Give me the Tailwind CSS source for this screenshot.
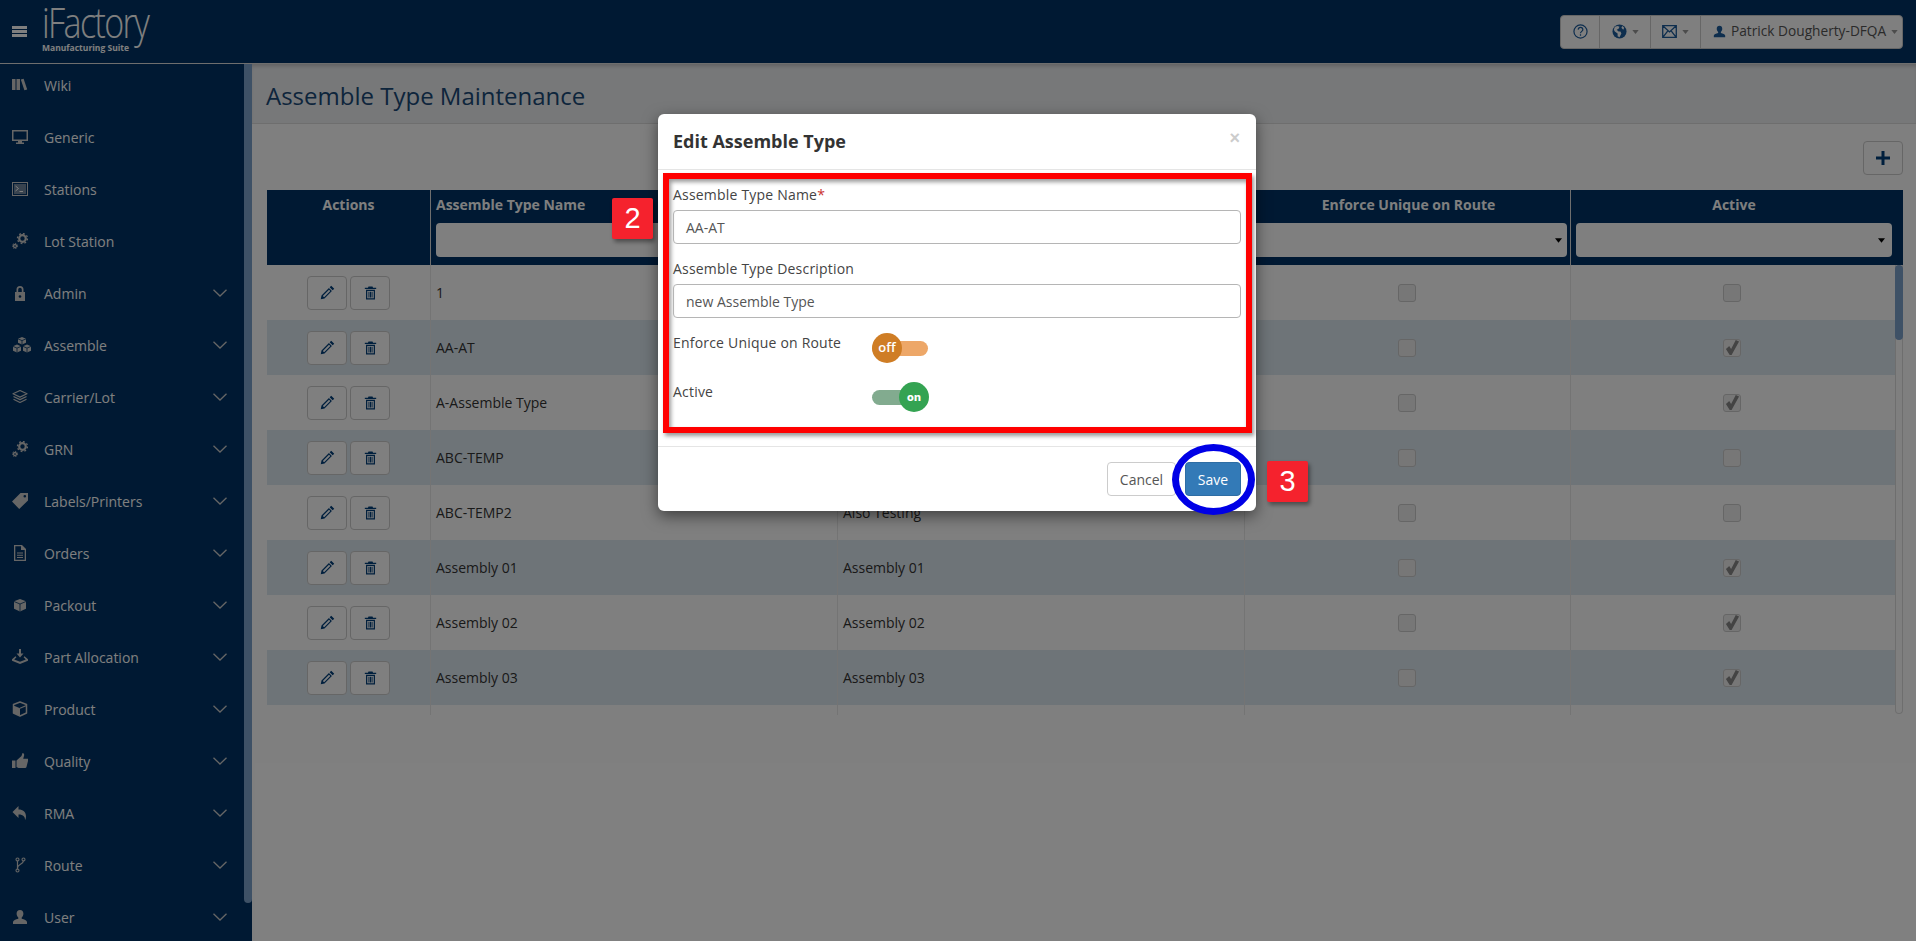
<!DOCTYPE html>
<html lang="en">
<head>
    <meta charset="UTF-8">
    <meta name="viewport" content="width=device-width, initial-scale=1.0">
    <title>Assemble Type Maintenance - iFactory</title>
    <script src="https://cdn.jsdelivr.net/npm/@tailwindcss/browser@4"></script>
</head>
<body class="relative h-screen overflow-hidden bg-white font-['Open_Sans',sans-serif] text-[14px] text-[#333]">
    <!-- Icon set -->
    <svg class="hidden">
        <symbol id="i-books" viewBox="0 0 16 16"><path fill="currentColor" d="M0 2h3.500v11H0zM4.500 2H8v11H4.500zM8.800 2.600l2.800-.8 3.600 10.600-2.800.9z"/></symbol>
        <symbol id="i-monitor" viewBox="0 0 16 16"><path fill="currentColor" d="M0 1h16v11H10v1.500h2V15H4v-1.500h2V12H0zm1.500 1.500v8h13v-8z"/></symbol>
        <symbol id="i-terminal" viewBox="0 0 16 16"><path fill="currentColor" d="M0 1h16v14H0zm1 1v12h14V2z"/><path fill="currentColor" opacity=".55" d="M2 3h12v10H2z"/><path fill="none" stroke="#fff" stroke-width="1" d="M3.500 5l3 2.500-3 2.500M7.500 10.500H11"/></symbol>
        <symbol id="i-cogs" viewBox="0 0 16 16"><circle cx="10.500" cy="5.500" r="3.300" fill="none" stroke="currentColor" stroke-width="2.200"/><circle cx="10.500" cy="5.500" r="5" fill="none" stroke="currentColor" stroke-width="1.400" stroke-dasharray="1.800 2.100"/><circle cx="3" cy="13" r="1.500" fill="none" stroke="currentColor" stroke-width="1.300"/><circle cx="3" cy="13" r="2.600" fill="none" stroke="currentColor" stroke-width="1" stroke-dasharray="1.200 1.200"/></symbol>
        <symbol id="i-lock" viewBox="0 0 16 16"><path fill="currentColor" d="M4.500 7V4.500a3.500 3.500 0 0 1 7 0V7H13v9H3V7zM6.200 7h3.600V4.500a1.800 1.800 0 0 0-3.600 0z"/><circle cx="8" cy="11.500" r="1.300" fill="#003366"/></symbol>
        <symbol id="i-cubes" viewBox="0 0 20 16"><path fill="currentColor" d="M10 0l4 1.700v4.100L10 7.500 6 5.800V1.700zM5 7.500l4 1.700v4.600L5 15.500 1 13.800V9.200zM15 7.500l4 1.700v4.600l-4 1.700-4-1.700V9.200z"/><path fill="none" stroke="#003366" stroke-width=".8" d="M6 1.900l4 1.700 4-1.700M1 9.400l4 1.700 4-1.700M11 9.400l4 1.700 4-1.700M10 3.600v3.900M5 11.100v4.400M15 11.100v4.400"/></symbol>
        <symbol id="i-layers" viewBox="0 0 16 16"><path fill="none" stroke="currentColor" stroke-width="1.200" stroke-linejoin="round" d="M8 1.500l7 3.300-7 3.300-7-3.300zM1.500 7.500L8 10.600l6.500-3.100M1.500 10.300L8 13.500l6.500-3.200"/></symbol>
        <symbol id="i-tag" viewBox="0 0 16 16"><path fill="currentColor" d="M8.500 0H16v7.500L7.200 16 0 8.500zM12.800 2a1.300 1.300 0 1 0 0 2.600 1.300 1.300 0 0 0 0-2.600z" fill-rule="evenodd"/></symbol>
        <symbol id="i-file" viewBox="0 0 16 16"><path fill="currentColor" fill-rule="evenodd" d="M2 0h8l4 4v12H2zm1.300 1.300v13.400h9.400V5H9V1.300zM5 7.500h6v1H5zM5 9.800h6v1H5zM5 12h6v1H5z"/></symbol>
        <symbol id="i-box" viewBox="0 0 16 16"><path fill="currentColor" d="M8 2l6 2.300v7.400L8 14.500l-6-2.800V4.300z"/><path fill="none" stroke="#003366" stroke-width=".8" d="M2 4.500l6 2.500 6-2.500M8 7v7.500"/></symbol>
        <symbol id="i-tray" viewBox="0 0 16 16"><path fill="currentColor" d="M7 0h2v4.500h2.500L8 8.500l-3.500-4H7z"/><path fill="currentColor" d="M3.500 7.300L0 10.300v1.500L8 15l8-3.200v-1.500l-3.500-3-.9 1 2.200 2.100L8 12.700 2.200 10.400l2.200-2.100z"/></symbol>
        <symbol id="i-cube" viewBox="0 0 16 16"><path fill="none" stroke="currentColor" stroke-width="1.500" stroke-linejoin="round" d="M8 1l6.500 2.500v8.500L8 15l-6.500-3V3.500z"/><path fill="currentColor" d="M1.500 4.500L8 7.200V15l-6.500-3z"/><path fill="none" stroke="currentColor" stroke-width="1.200" d="M8 7.200l6.500-2.700"/></symbol>
        <symbol id="i-thumb" viewBox="0 0 16 16"><path fill="currentColor" d="M0 7.500h3.500V15H0zM4.500 7.500L9.500 3l1-3c1.300 0 2 1.200 1.500 3l-.8 2.800H16V8l-1.600 6.300c-.2.500-.6.700-1.100.7H6.500l-2-1z"/></symbol>
        <symbol id="i-reply" viewBox="0 0 16 16"><path fill="currentColor" d="M6.500 1v3.500C11 4.500 14 7 14 11.500c0 1.500-.5 3-1 3.500.3-3-1.500-5.500-6.500-5.500V13L.5 7z"/></symbol>
        <symbol id="i-branch" viewBox="0 0 16 16"><path fill="none" stroke="currentColor" stroke-width="1.200" d="M5.500 3.500v9M11.500 3.500c0 4-6 3.500-6 7.500"/><circle cx="5.500" cy="2.500" r="1.500" fill="none" stroke="currentColor" stroke-width="1.100"/><circle cx="11.500" cy="2.500" r="1.500" fill="none" stroke="currentColor" stroke-width="1.100"/><circle cx="5.500" cy="13.500" r="1.500" fill="none" stroke="currentColor" stroke-width="1.100"/></symbol>
        <symbol id="i-user" viewBox="0 0 16 16"><path fill="currentColor" d="M8 1c2.200 0 3.400 1.500 3.400 3.600 0 1.600-.7 3.100-1.700 3.900v1.300c2.500.6 5.300 1.700 5.300 3.200V15H1v-2c0-1.500 2.800-2.600 5.300-3.200V8.500C5.300 7.700 4.600 6.200 4.600 4.600 4.600 2.500 5.800 1 8 1z"/></symbol>
        <symbol id="i-chevron" viewBox="0 0 14 8"><path fill="none" stroke="currentColor" stroke-width="1.300" d="M.5.700L7 7 13.500.7"/></symbol>
        <symbol id="i-pencil" viewBox="0 0 16 16"><path fill="currentColor" fill-rule="evenodd" d="M12 .8l3.200 3.200-1.700 1.700-3.200-3.200zM9.500 3.300l3.200 3.200-7.900 7.900L.8 15.200l.8-4zM9.600 5L3 11.600l1.400 1.400L11 6.400z"/></symbol>
        <symbol id="i-trash" viewBox="0 0 16 16"><path fill="currentColor" fill-rule="evenodd" d="M5.500 0h5l.6 1.500H15V3H1V1.500h3.900zM2.500 4h11v12h-11zM4 5.500v9h8v-9zM5.500 6.500h1.200v7H5.500zM7.400 6.500h1.200v7H7.400zM9.300 6.500h1.200v7H9.300z"/></symbol>
        <symbol id="i-check" viewBox="0 0 16 16"><path fill="currentColor" d="M1 9.500l3.500-3 2 3L11.500 0 15 1.500 7 16H5z"/></symbol>
        <symbol id="i-caret" viewBox="0 0 8 5"><path fill="currentColor" d="M0 0h8L4 5z"/></symbol>
    </svg>

    <!-- Header -->
    <header class="flex h-16 items-center justify-between border-b border-[#ddd] bg-[#003366] pl-3 pr-[13px]">
        <div class="flex items-center">
            <div class="flex w-[15px] flex-col gap-px">
                <span class="h-[3px] bg-white"></span>
                <span class="h-[3px] bg-white"></span>
                <span class="h-[3px] bg-white"></span>
            </div>
            <div class="mb-[9px] ml-[15px] flex w-[110px] flex-col text-white">
                <span class="origin-left scale-x-[0.81] whitespace-nowrap text-[42px] font-light leading-[42px] tracking-[-2px]">iFactory</span>
                <span class="whitespace-nowrap text-[8.500px] font-bold leading-[10px]">Manufacturing Suite</span>
            </div>
        </div>
        <div class="flex h-[34px] w-[343px] items-stretch rounded-[4px] border border-[#ccc] bg-white text-[#555]">
            <div class="flex w-[39px] shrink-0 items-center justify-center border-r border-[#ccc] text-[#1d5c9c]">
                <svg class="h-[15px] w-[15px]" viewBox="0 0 16 16"><circle cx="8" cy="8" r="7" fill="none" stroke="currentColor" stroke-width="1.300"/><path fill="none" stroke="currentColor" stroke-width="1.300" d="M5.500 6c.2-3.300 5-3.300 5 0 0 1.700-2.500 2-2.500 3.800M8 11v1.500"/></svg>
            </div>
            <div class="flex w-[51px] shrink-0 items-center justify-center gap-[5px] border-r border-[#ccc]">
                <svg class="h-[15px] w-[15px] text-[#1d5c9c]" viewBox="0 0 16 16"><circle cx="8" cy="8" r="7.500" fill="currentColor"/><path fill="#fff" d="M3 3l3-1 2 1-1 2-2 1 2 2 2 0 1 2-2 4-2-1 0-3-3-2-1-2zM11 2l2 2-1 2-2-2z"/></svg>
                <svg class="h-[4px] w-[7px] text-[#999]"><use href="#i-caret"/></svg>
            </div>
            <div class="flex w-[50px] shrink-0 items-center justify-center gap-[5px] border-r border-[#ccc]">
                <svg class="h-[13px] w-[15px] text-[#1d5c9c]" viewBox="0 0 16 14"><path fill="none" stroke="currentColor" stroke-width="1.400" d="M.7.700h14.600v12.600H.7zM1 1l7 6.500L15 1M1 13l5-6.500M15 13l-5-6.500"/></svg>
                <svg class="h-[4px] w-[7px] text-[#999]"><use href="#i-caret"/></svg>
            </div>
            <div class="flex flex-1 items-center gap-[5px] pl-[12px] pr-[4px] text-[13.700px]">
                <svg class="h-[13px] w-[13px] shrink-0 text-[#1d5c9c]"><use href="#i-user"/></svg>
                <span class="whitespace-nowrap">Patrick Dougherty-DFQA</span>
                <svg class="h-[4px] w-[7px] shrink-0 text-[#999]"><use href="#i-caret"/></svg>
            </div>
        </div>
    </header>

    <div class="flex h-[877px]">
        <!-- Sidebar -->
        <aside class="flex w-[252px] shrink-0 overflow-hidden bg-[#003366]">
            <nav class="-mt-[5px] w-[244px] shrink-0 text-white">
                <a class="flex h-[52px] items-center pl-3"><svg class="h-4 w-4 text-[#ccc]"><use href="#i-books"/></svg><span class="ml-4">Wiki</span></a>
                <a class="flex h-[52px] items-center pl-3"><svg class="h-4 w-4 text-[#ccc]"><use href="#i-monitor"/></svg><span class="ml-4">Generic</span></a>
                <a class="flex h-[52px] items-center pl-3"><svg class="h-4 w-4 text-[#ccc]"><use href="#i-terminal"/></svg><span class="ml-4">Stations</span></a>
                <a class="flex h-[52px] items-center pl-3"><svg class="h-4 w-4 text-[#ccc]"><use href="#i-cogs"/></svg><span class="ml-4">Lot Station</span></a>
                <a class="flex h-[52px] items-center pl-3"><svg class="h-4 w-4 text-[#ccc]"><use href="#i-lock"/></svg><span class="ml-4 flex-1">Admin</span><svg class="mr-[17px] h-2 w-[14px] text-[#ccc]"><use href="#i-chevron"/></svg></a>
                <a class="flex h-[52px] items-center pl-3"><svg class="h-4 w-5 text-[#ccc]"><use href="#i-cubes"/></svg><span class="ml-3 flex-1">Assemble</span><svg class="mr-[17px] h-2 w-[14px] text-[#ccc]"><use href="#i-chevron"/></svg></a>
                <a class="flex h-[52px] items-center pl-3"><svg class="h-4 w-4 text-[#ccc]"><use href="#i-layers"/></svg><span class="ml-4 flex-1">Carrier/Lot</span><svg class="mr-[17px] h-2 w-[14px] text-[#ccc]"><use href="#i-chevron"/></svg></a>
                <a class="flex h-[52px] items-center pl-3"><svg class="h-4 w-4 text-[#ccc]"><use href="#i-cogs"/></svg><span class="ml-4 flex-1">GRN</span><svg class="mr-[17px] h-2 w-[14px] text-[#ccc]"><use href="#i-chevron"/></svg></a>
                <a class="flex h-[52px] items-center pl-3"><svg class="h-4 w-4 text-[#ccc]"><use href="#i-tag"/></svg><span class="ml-4 flex-1">Labels/Printers</span><svg class="mr-[17px] h-2 w-[14px] text-[#ccc]"><use href="#i-chevron"/></svg></a>
                <a class="flex h-[52px] items-center pl-3"><svg class="h-4 w-4 text-[#ccc]"><use href="#i-file"/></svg><span class="ml-4 flex-1">Orders</span><svg class="mr-[17px] h-2 w-[14px] text-[#ccc]"><use href="#i-chevron"/></svg></a>
                <a class="flex h-[52px] items-center pl-3"><svg class="h-4 w-4 text-[#ccc]"><use href="#i-box"/></svg><span class="ml-4 flex-1">Packout</span><svg class="mr-[17px] h-2 w-[14px] text-[#ccc]"><use href="#i-chevron"/></svg></a>
                <a class="flex h-[52px] items-center pl-3"><svg class="h-4 w-4 text-[#ccc]"><use href="#i-tray"/></svg><span class="ml-4 flex-1">Part Allocation</span><svg class="mr-[17px] h-2 w-[14px] text-[#ccc]"><use href="#i-chevron"/></svg></a>
                <a class="flex h-[52px] items-center pl-3"><svg class="h-4 w-4 text-[#ccc]"><use href="#i-cube"/></svg><span class="ml-4 flex-1">Product</span><svg class="mr-[17px] h-2 w-[14px] text-[#ccc]"><use href="#i-chevron"/></svg></a>
                <a class="flex h-[52px] items-center pl-3"><svg class="h-4 w-4 text-[#ccc]"><use href="#i-thumb"/></svg><span class="ml-4 flex-1">Quality</span><svg class="mr-[17px] h-2 w-[14px] text-[#ccc]"><use href="#i-chevron"/></svg></a>
                <a class="flex h-[52px] items-center pl-3"><svg class="h-4 w-4 text-[#ccc]"><use href="#i-reply"/></svg><span class="ml-4 flex-1">RMA</span><svg class="mr-[17px] h-2 w-[14px] text-[#ccc]"><use href="#i-chevron"/></svg></a>
                <a class="flex h-[52px] items-center pl-3"><svg class="h-4 w-4 text-[#ccc]"><use href="#i-branch"/></svg><span class="ml-4 flex-1">Route</span><svg class="mr-[17px] h-2 w-[14px] text-[#ccc]"><use href="#i-chevron"/></svg></a>
                <a class="flex h-[52px] items-center pl-3"><svg class="h-4 w-4 text-[#ccc]"><use href="#i-user"/></svg><span class="ml-4 flex-1">User</span><svg class="mr-[17px] h-2 w-[14px] text-[#ccc]"><use href="#i-chevron"/></svg></a>
            </nav>
            <div class="h-[839px] w-2 rounded-b-[4px] bg-[#7da2cc]"></div>
        </aside>

        <!-- Main Content -->
        <main class="min-w-0 flex-1">
            <div class="flex h-[60px] items-center border-b border-[#ddd] bg-[#eef0f3] pl-[14px] pt-[4px] shadow-[inset_0_4px_4px_-2px_rgba(0,0,0,0.2)]">
                <h1 class="text-[24px] leading-[34px] text-[#1b4a78]">Assemble Type Maintenance</h1>
            </div>
            <div class="pl-[15px] pr-[13px]">
                <div class="flex h-[66px] items-start justify-end pt-[17px]">
                    <button class="flex h-[34px] w-10 items-center justify-center rounded-[4px] border border-[#ccc] bg-white text-[#003e7a]">
                        <svg class="h-[14px] w-[14px]" viewBox="0 0 14 14"><path fill="currentColor" d="M5.500 0h3v5.500H14v3H8.500V14h-3V8.500H0v-3h5.500z"/></svg>
                    </button>
                </div>

                <!-- Table header -->
                <div class="grid h-[75px] grid-cols-[164px_407px_407px_326px_332px] bg-[#003366] text-center font-bold text-white">
                    <div class="border-r border-[#ddd] pt-[4px]">Actions</div>
                    <div class="border-r border-[#ddd] px-[5px] pt-[4px] text-left">
                        Assemble Type Name
                        <div class="mt-[8px] h-[34px] rounded-[4px] bg-white"></div>
                    </div>
                    <div class="border-r border-[#ddd] px-[5px] pt-[4px] text-left">
                        Assemble Type Description
                        <div class="mt-[8px] h-[34px] rounded-[4px] bg-white"></div>
                    </div>
                    <div class="border-r border-[#ddd] pl-[5px] pr-[3px] pt-[4px]">
                        Enforce Unique on Route
                        <div class="mt-[8px] flex h-[34px] items-center justify-end rounded-[4px] bg-white pr-[5px] text-black"><svg class="h-[5px] w-[7px]"><use href="#i-caret"/></svg></div>
                    </div>
                    <div class="pl-[5px] pr-[11px] pt-[4px]">
                        Active
                        <div class="mt-[8px] flex h-[34px] items-center justify-end rounded-[4px] bg-white pr-[7px] text-black"><svg class="h-[5px] w-[7px]"><use href="#i-caret"/></svg></div>
                    </div>
                </div>

                <!-- Table body -->
                <div class="flex h-[450px]">
                    <div class="w-[1628px] overflow-hidden">
                        <div class="grid h-[55px] grid-cols-[164px_407px_407px_326px_324px] items-stretch">
                            <div class="flex items-center justify-center gap-[3px] border-r border-[#e8e8e8]"><button class="flex h-[34px] w-10 items-center justify-center rounded-[4px] border border-[#ccc] bg-white text-[#003e7a]"><svg class="h-[15px] w-[15px]"><use href="#i-pencil"/></svg></button><button class="flex h-[34px] w-10 items-center justify-center rounded-[4px] border border-[#ccc] bg-white text-[#003e7a]"><svg class="h-[14px] w-[13px]"><use href="#i-trash"/></svg></button></div>
                            <div class="flex items-center border-r border-[#e8e8e8] pl-[5px]">1</div>
                            <div class="flex items-center border-r border-[#e8e8e8] pl-[5px]"></div>
                            <div class="flex items-center justify-center border-r border-[#e8e8e8] pr-[2px]"><span class="h-[18px] w-[18px] rounded-[3px] border border-[#ccc] bg-[#eee]"></span></div>
                            <div class="flex items-center justify-center pr-[2px]"><span class="h-[18px] w-[18px] rounded-[3px] border border-[#ccc] bg-[#eee]"></span></div>
                        </div>
                        <div class="grid h-[55px] grid-cols-[164px_407px_407px_326px_324px] items-stretch bg-[#dde8f0]">
                            <div class="flex items-center justify-center gap-[3px] border-r border-[#e8e8e8]"><button class="flex h-[34px] w-10 items-center justify-center rounded-[4px] border border-[#ccc] bg-white text-[#003e7a]"><svg class="h-[15px] w-[15px]"><use href="#i-pencil"/></svg></button><button class="flex h-[34px] w-10 items-center justify-center rounded-[4px] border border-[#ccc] bg-white text-[#003e7a]"><svg class="h-[14px] w-[13px]"><use href="#i-trash"/></svg></button></div>
                            <div class="flex items-center border-r border-[#e8e8e8] pl-[5px]">AA-AT</div>
                            <div class="flex items-center border-r border-[#e8e8e8] pl-[5px]"></div>
                            <div class="flex items-center justify-center border-r border-[#e8e8e8] pr-[2px]"><span class="h-[18px] w-[18px] rounded-[3px] border border-[#ccc] bg-[#eee]"></span></div>
                            <div class="flex items-center justify-center pr-[2px]"><span class="flex h-[18px] w-[18px] items-center justify-center rounded-[3px] border border-[#ccc] bg-[#eee] text-[#888]"><svg class="h-[15px] w-[15px]"><use href="#i-check"/></svg></span></div>
                        </div>
                        <div class="grid h-[55px] grid-cols-[164px_407px_407px_326px_324px] items-stretch">
                            <div class="flex items-center justify-center gap-[3px] border-r border-[#e8e8e8]"><button class="flex h-[34px] w-10 items-center justify-center rounded-[4px] border border-[#ccc] bg-white text-[#003e7a]"><svg class="h-[15px] w-[15px]"><use href="#i-pencil"/></svg></button><button class="flex h-[34px] w-10 items-center justify-center rounded-[4px] border border-[#ccc] bg-white text-[#003e7a]"><svg class="h-[14px] w-[13px]"><use href="#i-trash"/></svg></button></div>
                            <div class="flex items-center border-r border-[#e8e8e8] pl-[5px]">A-Assemble Type</div>
                            <div class="flex items-center border-r border-[#e8e8e8] pl-[5px]"></div>
                            <div class="flex items-center justify-center border-r border-[#e8e8e8] pr-[2px]"><span class="h-[18px] w-[18px] rounded-[3px] border border-[#ccc] bg-[#eee]"></span></div>
                            <div class="flex items-center justify-center pr-[2px]"><span class="flex h-[18px] w-[18px] items-center justify-center rounded-[3px] border border-[#ccc] bg-[#eee] text-[#888]"><svg class="h-[15px] w-[15px]"><use href="#i-check"/></svg></span></div>
                        </div>
                        <div class="grid h-[55px] grid-cols-[164px_407px_407px_326px_324px] items-stretch bg-[#dde8f0]">
                            <div class="flex items-center justify-center gap-[3px] border-r border-[#e8e8e8]"><button class="flex h-[34px] w-10 items-center justify-center rounded-[4px] border border-[#ccc] bg-white text-[#003e7a]"><svg class="h-[15px] w-[15px]"><use href="#i-pencil"/></svg></button><button class="flex h-[34px] w-10 items-center justify-center rounded-[4px] border border-[#ccc] bg-white text-[#003e7a]"><svg class="h-[14px] w-[13px]"><use href="#i-trash"/></svg></button></div>
                            <div class="flex items-center border-r border-[#e8e8e8] pl-[5px]">ABC-TEMP</div>
                            <div class="flex items-center border-r border-[#e8e8e8] pl-[5px]"></div>
                            <div class="flex items-center justify-center border-r border-[#e8e8e8] pr-[2px]"><span class="h-[18px] w-[18px] rounded-[3px] border border-[#ccc] bg-[#eee]"></span></div>
                            <div class="flex items-center justify-center pr-[2px]"><span class="h-[18px] w-[18px] rounded-[3px] border border-[#ccc] bg-[#eee]"></span></div>
                        </div>
                        <div class="grid h-[55px] grid-cols-[164px_407px_407px_326px_324px] items-stretch">
                            <div class="flex items-center justify-center gap-[3px] border-r border-[#e8e8e8]"><button class="flex h-[34px] w-10 items-center justify-center rounded-[4px] border border-[#ccc] bg-white text-[#003e7a]"><svg class="h-[15px] w-[15px]"><use href="#i-pencil"/></svg></button><button class="flex h-[34px] w-10 items-center justify-center rounded-[4px] border border-[#ccc] bg-white text-[#003e7a]"><svg class="h-[14px] w-[13px]"><use href="#i-trash"/></svg></button></div>
                            <div class="flex items-center border-r border-[#e8e8e8] pl-[5px]">ABC-TEMP2</div>
                            <div class="flex items-center border-r border-[#e8e8e8] pl-[5px]">Also Testing</div>
                            <div class="flex items-center justify-center border-r border-[#e8e8e8] pr-[2px]"><span class="h-[18px] w-[18px] rounded-[3px] border border-[#ccc] bg-[#eee]"></span></div>
                            <div class="flex items-center justify-center pr-[2px]"><span class="h-[18px] w-[18px] rounded-[3px] border border-[#ccc] bg-[#eee]"></span></div>
                        </div>
                        <div class="grid h-[55px] grid-cols-[164px_407px_407px_326px_324px] items-stretch bg-[#dde8f0]">
                            <div class="flex items-center justify-center gap-[3px] border-r border-[#e8e8e8]"><button class="flex h-[34px] w-10 items-center justify-center rounded-[4px] border border-[#ccc] bg-white text-[#003e7a]"><svg class="h-[15px] w-[15px]"><use href="#i-pencil"/></svg></button><button class="flex h-[34px] w-10 items-center justify-center rounded-[4px] border border-[#ccc] bg-white text-[#003e7a]"><svg class="h-[14px] w-[13px]"><use href="#i-trash"/></svg></button></div>
                            <div class="flex items-center border-r border-[#e8e8e8] pl-[5px]">Assembly 01</div>
                            <div class="flex items-center border-r border-[#e8e8e8] pl-[5px]">Assembly 01</div>
                            <div class="flex items-center justify-center border-r border-[#e8e8e8] pr-[2px]"><span class="h-[18px] w-[18px] rounded-[3px] border border-[#ccc] bg-[#eee]"></span></div>
                            <div class="flex items-center justify-center pr-[2px]"><span class="flex h-[18px] w-[18px] items-center justify-center rounded-[3px] border border-[#ccc] bg-[#eee] text-[#888]"><svg class="h-[15px] w-[15px]"><use href="#i-check"/></svg></span></div>
                        </div>
                        <div class="grid h-[55px] grid-cols-[164px_407px_407px_326px_324px] items-stretch">
                            <div class="flex items-center justify-center gap-[3px] border-r border-[#e8e8e8]"><button class="flex h-[34px] w-10 items-center justify-center rounded-[4px] border border-[#ccc] bg-white text-[#003e7a]"><svg class="h-[15px] w-[15px]"><use href="#i-pencil"/></svg></button><button class="flex h-[34px] w-10 items-center justify-center rounded-[4px] border border-[#ccc] bg-white text-[#003e7a]"><svg class="h-[14px] w-[13px]"><use href="#i-trash"/></svg></button></div>
                            <div class="flex items-center border-r border-[#e8e8e8] pl-[5px]">Assembly 02</div>
                            <div class="flex items-center border-r border-[#e8e8e8] pl-[5px]">Assembly 02</div>
                            <div class="flex items-center justify-center border-r border-[#e8e8e8] pr-[2px]"><span class="h-[18px] w-[18px] rounded-[3px] border border-[#ccc] bg-[#eee]"></span></div>
                            <div class="flex items-center justify-center pr-[2px]"><span class="flex h-[18px] w-[18px] items-center justify-center rounded-[3px] border border-[#ccc] bg-[#eee] text-[#888]"><svg class="h-[15px] w-[15px]"><use href="#i-check"/></svg></span></div>
                        </div>
                        <div class="grid h-[55px] grid-cols-[164px_407px_407px_326px_324px] items-stretch bg-[#dde8f0]">
                            <div class="flex items-center justify-center gap-[3px] border-r border-[#e8e8e8]"><button class="flex h-[34px] w-10 items-center justify-center rounded-[4px] border border-[#ccc] bg-white text-[#003e7a]"><svg class="h-[15px] w-[15px]"><use href="#i-pencil"/></svg></button><button class="flex h-[34px] w-10 items-center justify-center rounded-[4px] border border-[#ccc] bg-white text-[#003e7a]"><svg class="h-[14px] w-[13px]"><use href="#i-trash"/></svg></button></div>
                            <div class="flex items-center border-r border-[#e8e8e8] pl-[5px]">Assembly 03</div>
                            <div class="flex items-center border-r border-[#e8e8e8] pl-[5px]">Assembly 03</div>
                            <div class="flex items-center justify-center border-r border-[#e8e8e8] pr-[2px]"><span class="h-[18px] w-[18px] rounded-[3px] border border-[#ccc] bg-[#eee]"></span></div>
                            <div class="flex items-center justify-center pr-[2px]"><span class="flex h-[18px] w-[18px] items-center justify-center rounded-[3px] border border-[#ccc] bg-[#eee] text-[#888]"><svg class="h-[15px] w-[15px]"><use href="#i-check"/></svg></span></div>
                        </div>
                        <div class="grid h-[10px] grid-cols-[164px_407px_407px_326px_324px]">
                            <div class="border-r border-[#e8e8e8]"></div>
                            <div class="border-r border-[#e8e8e8]"></div>
                            <div class="border-r border-[#e8e8e8]"></div>
                            <div class="border-r border-[#e8e8e8]"></div>
                        </div>
                    </div>
                    <!-- Table scrollbar -->
                    <div class="h-[449px] w-2 rounded-b-[4px] border border-t-0 border-[#ddd]">
                        <div class="-mx-px h-[75px] rounded-[4px] bg-[#7da2cc]"></div>
                    </div>
                </div>
            </div>
        </main>
    </div>

    <!-- Backdrop -->
    <div class="absolute inset-0 bg-black/50"></div>

    <!-- Modal -->
    <div class="absolute left-[658px] top-[114px] h-[397px] w-[598px] rounded-[6px] bg-white shadow-[0_5px_15px_rgba(0,0,0,0.5)]">
        <div class="flex h-[56px] items-center justify-between border-b border-[#e5e5e5] pb-[1px] pl-[15px] pr-[16px]">
            <h4 class="text-[18px] font-bold text-[#333]">Edit Assemble Type</h4>
            <span class="-mt-[6px] font-['Liberation_Sans',sans-serif] text-[18px] font-bold text-[#ccc]">&times;</span>
        </div>
        <div class="ml-[5px] mr-[4px] mt-[3px] h-[260px] border-[6px] border-[#ff0000] pl-1 pr-[5px] pt-[6px] text-[#444] shadow-[2px_3px_4px_rgba(0,0,0,0.4),inset_2px_3px_4px_rgba(0,0,0,0.4)]">
            <label class="block font-medium leading-5 tracking-[0.2px]">Assemble Type Name<span class="text-[#c9302c]">*</span></label>
            <div class="mt-[5px] flex h-[34px] items-center rounded-[4px] border border-[#b5b5b5] pl-3 text-[#555]">AA-AT</div>
            <label class="mt-[15px] block font-medium leading-5 tracking-[0.2px]">Assemble Type Description</label>
            <div class="mt-[5px] flex h-[34px] items-center rounded-[4px] border border-[#b5b5b5] pl-3 text-[#555]">new Assemble Type</div>
            <div class="mt-[15px] flex h-[30px] items-start">
                <label class="w-[199px] font-medium leading-5 tracking-[0.2px]">Enforce Unique on Route</label>
                <div class="relative h-[30px] w-[57px]">
                    <div class="absolute left-0 top-2 h-[15px] w-[56px] rounded-full bg-[#eda768]"></div>
                    <div class="absolute left-0 top-0 flex h-[30px] w-[30px] items-center justify-center rounded-full bg-[#cf7d25] text-[13px] font-semibold text-white">off</div>
                </div>
            </div>
            <div class="mt-[19px] flex h-[30px] items-start">
                <label class="w-[199px] font-medium leading-5 tracking-[0.2px]">Active</label>
                <div class="relative h-[30px] w-[57px]">
                    <div class="absolute left-0 top-2 h-[15px] w-[56px] rounded-full bg-[#82ab8f]"></div>
                    <div class="absolute left-[27px] top-0 flex h-[30px] w-[30px] items-center justify-center rounded-full bg-[#34a352] font-['Inter',sans-serif] text-[11px] font-extrabold text-white">on</div>
                </div>
            </div>
        </div>
        <div class="mt-[13px] flex h-[65px] items-start justify-end gap-[9px] border-t border-[#e5e5e5] pr-[15px] pt-[15px]">
            <button class="h-[34px] w-[69px] rounded-[4px] border border-[#ccc] bg-white text-[#555]">Cancel</button>
            <button class="h-[34px] w-[56px] rounded-[4px] border border-[#2e6da4] bg-[#337ab7] text-white">Save</button>
        </div>
    </div>

    <!-- Annotations -->
    <div class="absolute left-[612px] top-[198px] flex h-[41px] w-[41px] items-center justify-center rounded-[2px] bg-[#f5222d] font-['Liberation_Sans',sans-serif] text-[29px] text-white shadow-[2px_3px_4px_rgba(0,0,0,0.4)]">2</div>
    <div class="absolute left-[1267px] top-[461px] flex h-[41px] w-[41px] items-center justify-center rounded-[2px] bg-[#f5222d] font-['Liberation_Sans',sans-serif] text-[29px] text-white shadow-[2px_3px_4px_rgba(0,0,0,0.4)]">3</div>
    <div class="absolute left-[1172px] top-[444px] h-[71px] w-[83px] rounded-[50%] border-[7px] border-[#0000e6]"></div>
</body>
</html>
